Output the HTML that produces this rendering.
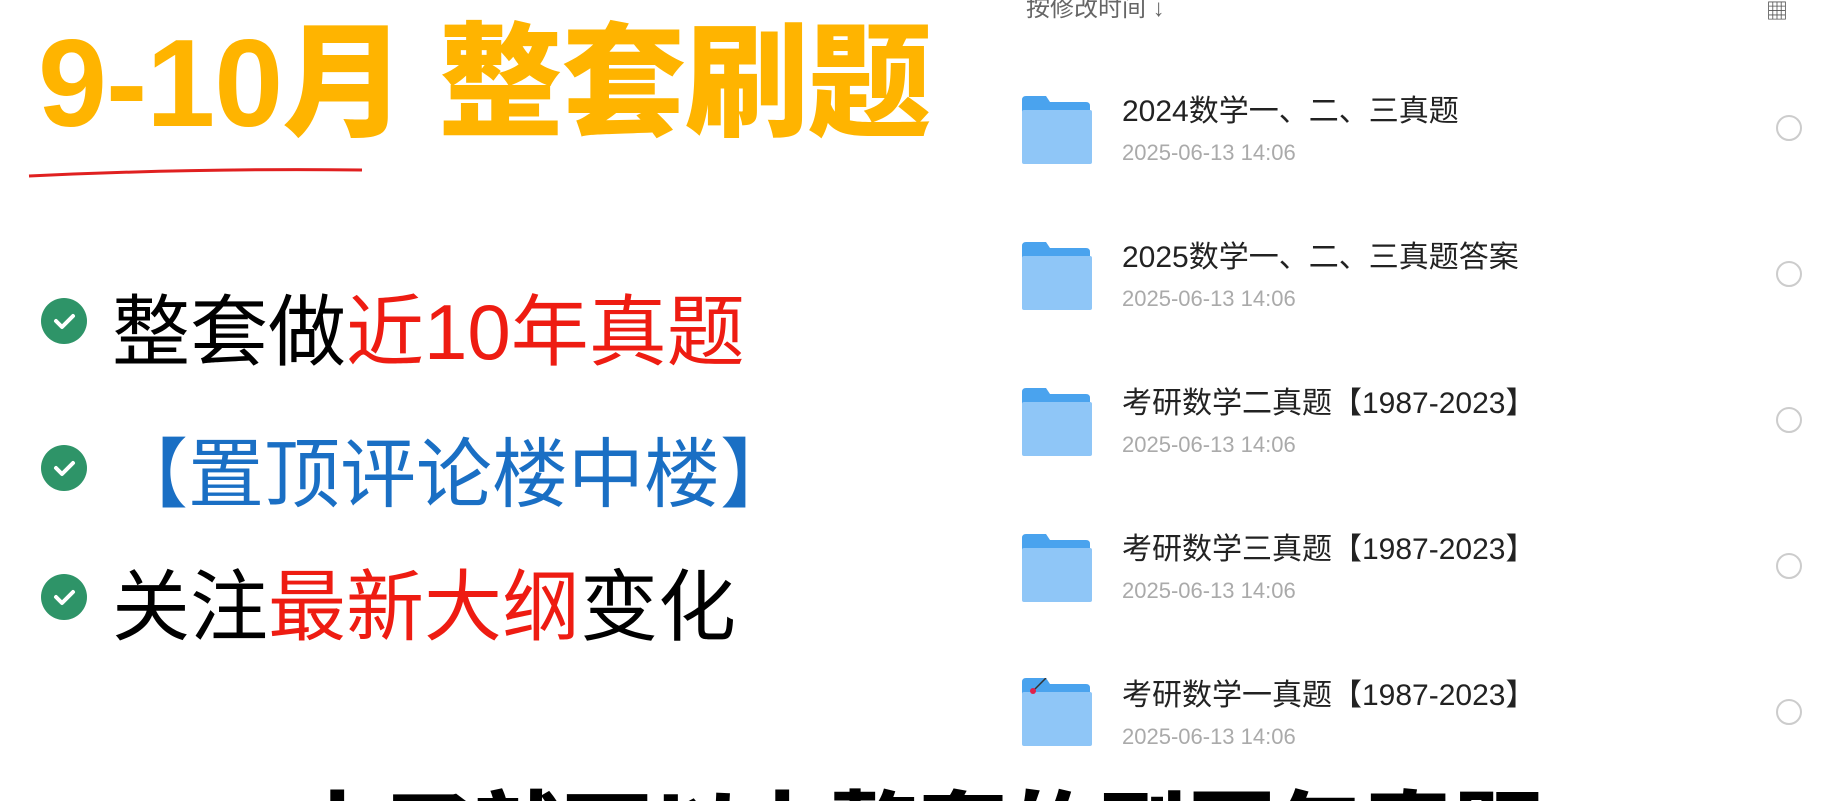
<!DOCTYPE html>
<html style="overflow:hidden;height:801px"><head><meta charset="utf-8"><style>
html,body{margin:0;width:1833px;height:801px;overflow:hidden}
body{background:#fff;position:relative;font-family:"Liberation Sans","Noto Sans CJK SC",sans-serif}
#w{position:absolute;left:0;top:0;width:1833px;height:801px;overflow:hidden}
.a{position:absolute;white-space:nowrap}
.t{left:38px;top:16px;font-size:124px;font-weight:900;color:#FFB400;letter-spacing:-1px;line-height:1.1}
.ck{position:absolute;left:41px;width:46px;height:46px;border-radius:50%;background:#2e9468}
.ck svg{position:absolute;left:0;top:0}
.b{font-size:78px;line-height:1;color:#000}
.r{color:#ee1c12}
.bl{color:#1a6fc4}
.f{position:absolute;left:1020px;width:72px;height:68px}
.ti{left:1122px;font-size:30px;color:#222;line-height:1}
.dt{left:1122px;font-size:22px;color:#aaa;line-height:1}
.c{position:absolute;left:1776px;width:22px;height:22px;border:2px solid #ccc;border-radius:50%}
</style></head><body><div id="w">
<div class="a t">9-10月 整套刷题</div>
<svg class="a" style="left:0;top:160px" width="400" height="30"><path d="M29 16 Q200 8 362 10" stroke="#e02020" stroke-width="3" fill="none"/></svg>

<div class="ck" style="top:298px"><svg width="46" height="46"><path d="M15 23 L21 29 L32 18" stroke="#fff" stroke-width="4" fill="none" stroke-linecap="round" stroke-linejoin="round"/></svg></div>
<div class="a b" style="left:112px;top:293px">整套做<span class="r">近10年真题</span></div>
<div class="ck" style="top:445px"><svg width="46" height="46"><path d="M15 23 L21 29 L32 18" stroke="#fff" stroke-width="4" fill="none" stroke-linecap="round" stroke-linejoin="round"/></svg></div>
<div class="a b bl" style="left:112px;top:438px;font-size:76px">【置顶评论楼中楼】</div>
<div class="ck" style="top:574px"><svg width="46" height="46"><path d="M15 23 L21 29 L32 18" stroke="#fff" stroke-width="4" fill="none" stroke-linecap="round" stroke-linejoin="round"/></svg></div>
<div class="a b" style="left:112px;top:568px">关注<span class="r">最新大纲</span>变化</div>

<div class="a" style="left:1026px;top:-12px;font-size:24px;color:#666">按修改时间 ↓</div>
<div class="a" style="left:1766px;top:-6px;font-size:22px;color:#555">▦</div>

<svg class="f" style="top:96px" viewBox="0 0 72 68"><path d="M2 4 Q2 0 6 0 H26 L30 6 H66 Q70 6 70 10 V66 H2Z" fill="#4aa3ee"/><rect x="2" y="14" width="70" height="54" rx="2" fill="#8fc6f7"/></svg>
<div class="a ti" style="top:97px">2024数学一、二、三真题</div>
<div class="a dt" style="top:142px">2025-06-13 14:06</div>
<div class="c" style="top:115px"></div>

<svg class="f" style="top:242px" viewBox="0 0 72 68"><path d="M2 4 Q2 0 6 0 H26 L30 6 H66 Q70 6 70 10 V66 H2Z" fill="#4aa3ee"/><rect x="2" y="14" width="70" height="54" rx="2" fill="#8fc6f7"/></svg>
<div class="a ti" style="top:243px">2025数学一、二、三真题答案</div>
<div class="a dt" style="top:288px">2025-06-13 14:06</div>
<div class="c" style="top:261px"></div>

<svg class="f" style="top:388px" viewBox="0 0 72 68"><path d="M2 4 Q2 0 6 0 H26 L30 6 H66 Q70 6 70 10 V66 H2Z" fill="#4aa3ee"/><rect x="2" y="14" width="70" height="54" rx="2" fill="#8fc6f7"/></svg>
<div class="a ti" style="top:389px">考研数学二真题【1987-2023】</div>
<div class="a dt" style="top:434px">2025-06-13 14:06</div>
<div class="c" style="top:407px"></div>

<svg class="f" style="top:534px" viewBox="0 0 72 68"><path d="M2 4 Q2 0 6 0 H26 L30 6 H66 Q70 6 70 10 V66 H2Z" fill="#4aa3ee"/><rect x="2" y="14" width="70" height="54" rx="2" fill="#8fc6f7"/></svg>
<div class="a ti" style="top:535px">考研数学三真题【1987-2023】</div>
<div class="a dt" style="top:580px">2025-06-13 14:06</div>
<div class="c" style="top:553px"></div>

<svg class="f" style="top:678px" viewBox="0 0 72 68"><path d="M2 4 Q2 0 6 0 H26 L30 6 H66 Q70 6 70 10 V66 H2Z" fill="#4aa3ee"/><rect x="2" y="14" width="70" height="54" rx="2" fill="#8fc6f7"/><path d="M14 12 L26 0" stroke="#333" stroke-width="1.5"/><circle cx="13" cy="13" r="3" fill="#e0204a"/></svg>
<div class="a ti" style="top:681px">考研数学一真题【1987-2023】</div>
<div class="a dt" style="top:726px">2025-06-13 14:06</div>
<div class="c" style="top:699px"></div>

<div class="a" style="left:296px;top:790px;font-size:88px;font-weight:900;color:#000;line-height:1;letter-spacing:1px">上了就可以上整套的刷历年真题</div>
</div></body></html>
